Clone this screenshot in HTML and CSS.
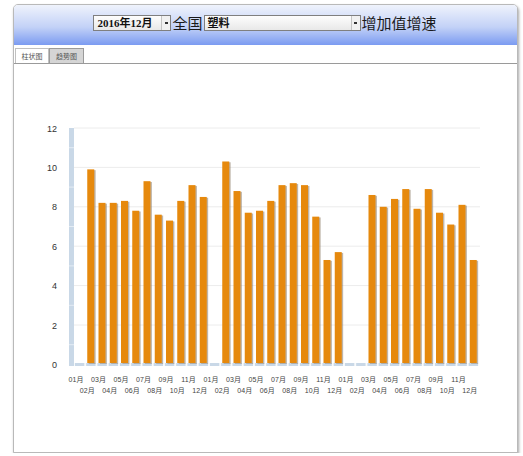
FILE: index.html
```html
<!DOCTYPE html>
<html lang="zh-CN">
<head>
<meta charset="utf-8">
<title>增加值增速</title>
<link rel="stylesheet" href="styles.css">
</head>
<body>
<div class="panel">
  <div class="header">
    <div class="select sel-date"><span class="val">2016年12月</span><span class="btn"></span></div>
    <span class="title">全国</span>
    <div class="select sel-ind"><span class="val">塑料</span><span class="btn"></span></div>
    <span class="title">增加值增速</span>
  </div>
  <div class="tabs">
    <div class="tab active">柱状图</div>
    <div class="tab">趋势图</div>
  </div>
  <div class="chart">
    <svg class="plot" width="503" height="388" viewBox="14 64 503 388" xmlns="http://www.w3.org/2000/svg">
      <defs>
        <pattern id="base" x="74" y="363" width="11.25" height="3" patternUnits="userSpaceOnUse">
          <rect x="0.8" y="0" width="9.6" height="3" fill="#c9d8e7"/>
        </pattern>
        <g id="bars">
          <rect x="87.25" y="169.37" width="7" height="193.63"/>
          <rect x="98.5" y="202.86" width="7" height="160.14"/>
          <rect x="109.75" y="202.86" width="7" height="160.14"/>
          <rect x="121" y="200.89" width="7" height="162.11"/>
          <rect x="132.25" y="210.74" width="7" height="152.26"/>
          <rect x="143.5" y="181.19" width="7" height="181.81"/>
          <rect x="154.75" y="214.68" width="7" height="148.32"/>
          <rect x="166" y="220.59" width="7" height="142.41"/>
          <rect x="177.25" y="200.89" width="7" height="162.11"/>
          <rect x="188.5" y="185.13" width="7" height="177.87"/>
          <rect x="199.75" y="196.95" width="7" height="166.05"/>
          <rect x="222.25" y="161.49" width="7" height="201.51"/>
          <rect x="233.5" y="191.04" width="7" height="171.96"/>
          <rect x="244.75" y="212.71" width="7" height="150.29"/>
          <rect x="256" y="210.74" width="7" height="152.26"/>
          <rect x="267.25" y="200.89" width="7" height="162.11"/>
          <rect x="278.5" y="185.13" width="7" height="177.87"/>
          <rect x="289.75" y="183.16" width="7" height="179.84"/>
          <rect x="301" y="185.13" width="7" height="177.87"/>
          <rect x="312.25" y="216.65" width="7" height="146.35"/>
          <rect x="323.5" y="259.99" width="7" height="103.01"/>
          <rect x="334.75" y="252.11" width="7" height="110.89"/>
          <rect x="368.5" y="194.98" width="7" height="168.02"/>
          <rect x="379.75" y="206.8" width="7" height="156.2"/>
          <rect x="391" y="198.92" width="7" height="164.08"/>
          <rect x="402.25" y="189.07" width="7" height="173.93"/>
          <rect x="413.5" y="208.77" width="7" height="154.23"/>
          <rect x="424.75" y="189.07" width="7" height="173.93"/>
          <rect x="436" y="212.71" width="7" height="150.29"/>
          <rect x="447.25" y="224.53" width="7" height="138.47"/>
          <rect x="458.5" y="204.83" width="7" height="158.17"/>
          <rect x="469.75" y="259.99" width="7" height="103.01"/>
        </g>
      </defs>

      <g class="grid">
        <line x1="74" y1="128" x2="480" y2="128"/>
        <line x1="74" y1="167.4" x2="480" y2="167.4"/>
        <line x1="74" y1="206.8" x2="480" y2="206.8"/>
        <line x1="74" y1="246.2" x2="480" y2="246.2"/>
        <line x1="74" y1="285.6" x2="480" y2="285.6"/>
        <line x1="74" y1="325" x2="480" y2="325"/>
      </g>

      <rect x="69" y="128" width="5" height="238" fill="#c9d8e7"/>
      <g class="minor">
        <line x1="69" y1="147.7" x2="74" y2="147.7"/>
        <line x1="69" y1="187.1" x2="74" y2="187.1"/>
        <line x1="69" y1="226.5" x2="74" y2="226.5"/>
        <line x1="69" y1="265.9" x2="74" y2="265.9"/>
        <line x1="69" y1="305.3" x2="74" y2="305.3"/>
        <line x1="69" y1="344.7" x2="74" y2="344.7"/>
      </g>
      <rect x="74" y="363" width="405" height="3" fill="url(#base)"/>

      <use href="#bars" x="1.4" y="0.8" fill="#8a7a66" opacity="0.55"/>
      <use href="#bars" fill="#e6890d"/>

      <g class="ylab">
        <text x="57" y="131.5">12</text>
        <text x="57" y="170.9">10</text>
        <text x="57" y="210.3">8</text>
        <text x="57" y="249.7">6</text>
        <text x="57" y="289.1">4</text>
        <text x="57" y="328.5">2</text>
        <text x="57" y="367.9">0</text>
      </g>

      <g class="xlab">
        <text x="76" y="382">01月</text>
        <text x="87.25" y="393">02月</text>
        <text x="98.5" y="382">03月</text>
        <text x="109.75" y="393">04月</text>
        <text x="121" y="382">05月</text>
        <text x="132.25" y="393">06月</text>
        <text x="143.5" y="382">07月</text>
        <text x="154.75" y="393">08月</text>
        <text x="166" y="382">09月</text>
        <text x="177.25" y="393">10月</text>
        <text x="188.5" y="382">11月</text>
        <text x="199.75" y="393">12月</text>
        <text x="211" y="382">01月</text>
        <text x="222.25" y="393">02月</text>
        <text x="233.5" y="382">03月</text>
        <text x="244.75" y="393">04月</text>
        <text x="256" y="382">05月</text>
        <text x="267.25" y="393">06月</text>
        <text x="278.5" y="382">07月</text>
        <text x="289.75" y="393">08月</text>
        <text x="301" y="382">09月</text>
        <text x="312.25" y="393">10月</text>
        <text x="323.5" y="382">11月</text>
        <text x="334.75" y="393">12月</text>
        <text x="346" y="382">01月</text>
        <text x="357.25" y="393">02月</text>
        <text x="368.5" y="382">03月</text>
        <text x="379.75" y="393">04月</text>
        <text x="391" y="382">05月</text>
        <text x="402.25" y="393">06月</text>
        <text x="413.5" y="382">07月</text>
        <text x="424.75" y="393">08月</text>
        <text x="436" y="382">09月</text>
        <text x="447.25" y="393">10月</text>
        <text x="458.5" y="382">11月</text>
        <text x="469.75" y="393">12月</text>
      </g>
    </svg>
  </div>
</div>
</body>
</html>
```

FILE: styles.css
```css
html, body {
  margin: 0;
  padding: 0;
  background: #ffffff;
}

body {
  font-family: "Liberation Sans", "Noto Sans CJK SC", sans-serif;
}

.panel {
  margin: 4px 0 0 13px;
  width: 503px;
  border: 1px solid #b9b9b9;
  border-radius: 5px 5px 0 0;
  box-shadow: 1px 2px 3px rgba(0, 0, 0, 0.35);
  background: #ffffff;
}

.header {
  height: 40px;
  box-sizing: border-box;
  padding-bottom: 5px;
  display: flex;
  align-items: center;
  justify-content: center;
  background: linear-gradient(#eff3fc 0%, #c3d2f7 55%, #7b9bf1 100%);
  border-radius: 4px 4px 0 0;
}

.select {
  display: flex;
  height: 16px;
  box-sizing: border-box;
  border: 1px solid #7f7f7f;
  background: linear-gradient(#fdfdfd, #e8e8e8);
}

.sel-date {
  width: 78px;
}

.sel-ind {
  width: 157px;
}

.val {
  flex: 1;
  font-family: "Liberation Serif", "Noto Sans CJK SC", serif;
  font-weight: bold;
  font-size: 11px;
  line-height: 14px;
  padding-left: 3px;
  color: #111111;
  white-space: nowrap;
}

.btn {
  width: 8px;
  border-left: 1px solid #c4c4c4;
  background: #f1f1f1;
  display: flex;
  align-items: center;
  justify-content: center;
}

.btn::after {
  content: "";
  display: block;
  width: 3px;
  height: 2px;
  background: #333333;
}

.title {
  font-family: "Noto Sans CJK SC", sans-serif;
  font-size: 15px;
  line-height: 1;
  color: #1a1a1a;
  margin: 0 1px;
}

.tabs {
  display: flex;
  align-items: flex-end;
  height: 18px;
  padding-left: 1px;
  border-bottom: 1px solid #9a9a9a;
}

.tab {
  height: 15px;
  width: 35px;
  box-sizing: border-box;
  border: 1px solid #9a9a9a;
  border-bottom: none;
  background: #d5d5d5;
  font-family: "Noto Sans CJK SC", sans-serif;
  font-size: 7px;
  color: #555555;
  display: flex;
  align-items: center;
  justify-content: center;
}

.tab.active {
  width: 34px;
  background: #ffffff;
  border-color: #c0c0c0;
}

.chart {
  height: 388px;
}

.plot {
  display: block;
}

.grid line {
  stroke: #ececec;
  stroke-width: 1;
}

.minor line {
  stroke: #e4ecf4;
  stroke-width: 1;
}

.ylab text {
  font-family: "Liberation Sans", sans-serif;
  font-size: 9px;
  fill: #333333;
  text-anchor: end;
}

.xlab text {
  font-family: "Liberation Sans", "Noto Sans CJK SC", sans-serif;
  font-size: 7px;
  fill: #444444;
  text-anchor: middle;
}
```
